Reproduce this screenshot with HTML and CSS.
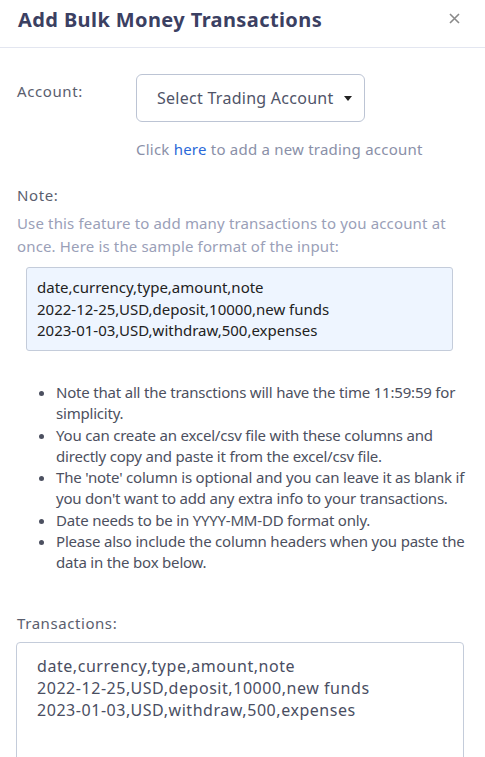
FILE: index.html
```html
<!DOCTYPE html>
<html lang="en">
<head>
<meta charset="UTF-8">
<meta name="viewport" content="width=device-width, initial-scale=1.0">
<title>Add Bulk Money Transactions</title>
<link rel="stylesheet" href="styles.css">
</head>
<body>
<div class="modal">
  <div class="modal-header">
    <h2>Add Bulk Money Transactions</h2>
    <span class="close">
      <svg width="11" height="11" viewBox="0 0 11 11"><path d="M1 1L10 10M10 1L1 10" stroke="#8a8a8a" stroke-width="1.6" fill="none"/></svg>
    </span>
  </div>
  <div class="modal-body">
    <div class="account-row">
      <label>Account:</label>
      <div class="account-pick">
        <button class="dropdown">Select Trading Account <span class="caret"></span></button>
        <p class="hint">Click <a href="#">here</a> to add a new trading account</p>
      </div>
    </div>

    <div class="note-title">Note:</div>
    <p class="note-text">Use this feature to add many transactions to you account at once. Here is the sample format of the input:</p>
    <div class="sample">date,currency,type,amount,note<br>2022-12-25,USD,deposit,10000,new funds<br>2023-01-03,USD,withdraw,500,expenses</div>

    <ul class="rules">
      <li>Note that all the transctions will have the time 11:59:59 for simplicity.</li>
      <li>You can create an excel/csv file with these columns and directly copy and paste it from the excel/csv file.</li>
      <li>The 'note' column is optional and you can leave it as blank if you don't want to add any extra info to your transactions.</li>
      <li>Date needs to be in YYYY-MM-DD format only.</li>
      <li>Please also include the column headers when you paste the data in the box below.</li>
    </ul>

    <label class="tx-label">Transactions:</label>
    <textarea class="tx-input" rows="6">date,currency,type,amount,note
2022-12-25,USD,deposit,10000,new funds
2023-01-03,USD,withdraw,500,expenses</textarea>
  </div>
</div>
</body>
</html>
```
FILE: styles.css
```css
body {
  margin: 0;
  font-family: "Noto Sans", sans-serif;
  background: #fff;
  color: #5a5e6e;
}
.modal-header {
  display: flex;
  justify-content: space-between;
  align-items: center;
  height: 27px;
  padding: 6px 25px 14px 18px;
  border-bottom: 1px solid #e3e6f0;
}
.modal-header h2 {
  margin: 0;
  font-size: 20px;
  line-height: 27px;
  font-weight: 700;
  letter-spacing: 0.4px;
  color: #3b4062;
}
.close {
  display: flex;
  margin-top: -2px;
}
.modal-body {
  padding: 26px 16px 0 17px;
}
.account-row {
  display: flex;
}
.account-row label {
  width: 119px;
  font-size: 15px;
  line-height: 20px;
  letter-spacing: 0.6px;
  padding-top: 7px;
}
.dropdown {
  display: flex;
  align-items: center;
  width: 229px;
  height: 48px;
  background: #fff;
  border: 1px solid #bcc4d4;
  border-radius: 6px;
  font-family: inherit;
  font-size: 16px;
  letter-spacing: 0.27px;
  color: #4f5468;
  padding: 0 0 0 20px;
}
.caret {
  display: inline-block;
  margin-left: 10px;
  margin-top: 1px;
  border-top: 5px solid #222;
  border-left: 4px solid transparent;
  border-right: 4px solid transparent;
}
.hint {
  margin: 17px 0 0;
  font-size: 15px;
  line-height: 20px;
  letter-spacing: 0.22px;
  color: #8a90a8;
}
.hint a {
  color: #2a68d8;
  text-decoration: none;
}
.note-title {
  margin-top: 26px;
  font-size: 15px;
  line-height: 20px;
  letter-spacing: 0.6px;
}
.note-text {
  margin: 6.5px 5px 0 0;
  font-size: 15px;
  line-height: 23px;
  letter-spacing: 0.15px;
  color: #9aa0b8;
}
.sample {
  margin: 9.5px 16px 0 9px;
  padding: 9px 10px 8.5px 10px;
  background: #eef5ff;
  border: 1px solid #c4ccda;
  border-radius: 3px;
  font-size: 15px;
  line-height: 21.5px;
  color: #222;
}
.rules {
  margin: 31px 0 0;
  padding-left: 39px;
  font-size: 15px;
  line-height: 21.3px;
  letter-spacing: -0.2px;
  color: #4c5060;
}
.tx-label {
  display: block;
  margin-top: 39px;
  font-size: 15px;
  line-height: 20px;
  letter-spacing: 0.57px;
}
.tx-input {
  display: block;
  box-sizing: border-box;
  width: 448px;
  margin: 9px 0 0 -1px;
  padding: 12px 20px;
  border: 1px solid #c4ccda;
  border-radius: 4px;
  font-family: inherit;
  font-size: 16px;
  line-height: 22px;
  letter-spacing: 0.55px;
  color: #4a4e62;
  resize: none;
}
```
